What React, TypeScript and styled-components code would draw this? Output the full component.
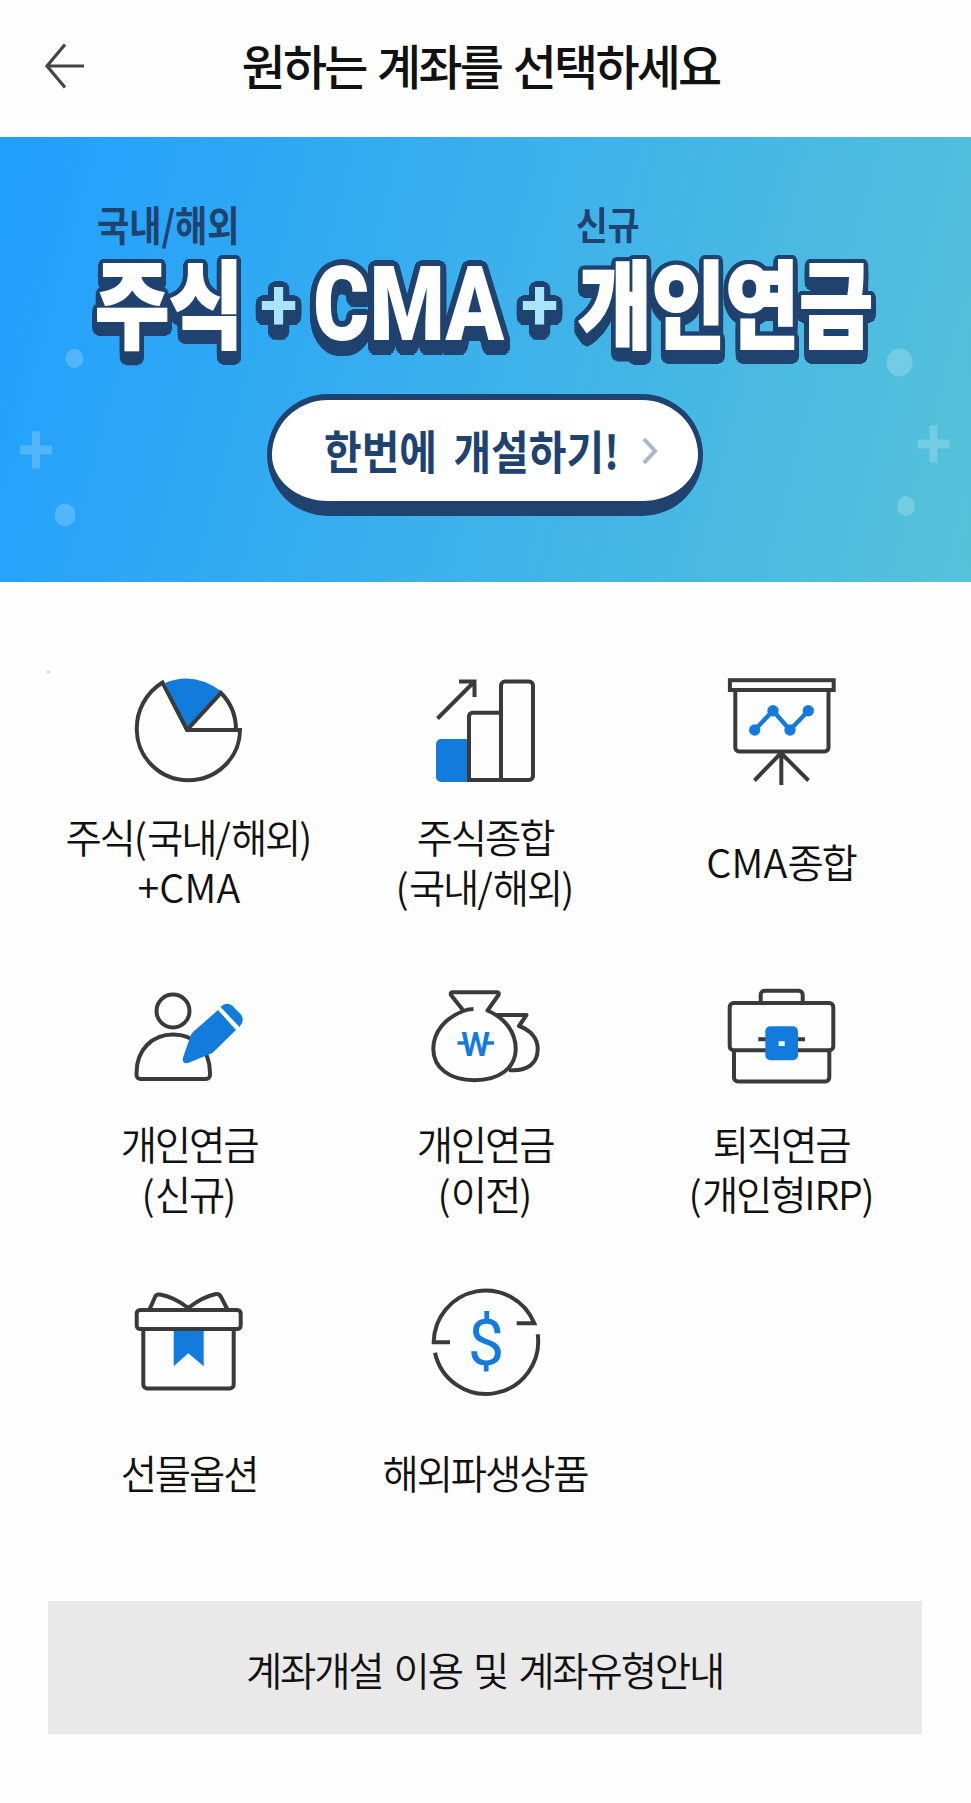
import React from 'react';
import styled, { createGlobalStyle } from 'styled-components';

const INK = '#3a3a3a';
const BLUE = '#127bdc';
const NAVY = '#20426f';

// Round outline of the headline letters, repeated downwards for their depth.
const outline = (radius: number, stretch: number, depth: number) => {
  const shadows: string[] = [];
  for (let drop = 0; drop <= depth; drop += 3) {
    for (let step = 0; step < 16; step += 1) {
      const angle = (step * Math.PI) / 8;
      const x = ((radius * Math.cos(angle)) / stretch).toFixed(1);
      const y = (radius * Math.sin(angle) + drop).toFixed(1);
      shadows.push(`${x}px ${y}px 0 ${NAVY}`);
    }
  }
  return shadows.join(', ');
};

const GlobalStyle = createGlobalStyle`
  * { box-sizing: border-box; }
  body { margin: 0; background: #fefefe; }
  button { border: 0; padding: 0; background: none; font: inherit; color: inherit; }
`;

const Page = styled.div`
  width: 971px;
  min-height: 1803px;
  display: flex;
  flex-direction: column;
  background: #fefefe;
  color: #111;
  font-family: 'Noto Sans CJK KR', sans-serif;
  overflow: hidden;
`;

const Header = styled.header`
  height: 137px;
  display: grid;
  grid-template-columns: 130px 1fr 130px;
  align-items: center;
`;

const BackButton = styled.button`
  width: 44px;
  height: 50px;
  margin: 0 0 6px 43px;
`;

const Title = styled.h1`
  margin: 0 10px 9px 0;
  font-size: 48px;
  line-height: 70px;
  font-weight: 500;
  letter-spacing: -2.8px;
  word-spacing: 3.5px;
  text-align: center;
  white-space: nowrap;
`;

const Banner = styled.section`
  position: relative;
  height: 445px;
  display: flex;
  flex-direction: column;
  background: linear-gradient(105deg, #209ffe 0%, #3bb0ec 48%, #56c2d9 100%);
  color: ${NAVY};
`;

const Decoration = styled.svg`
  position: absolute;
  inset: 0;
`;

const Eyebrows = styled.div`
  display: flex;
  align-items: flex-end;
  height: 54px;
  margin-top: 59px;
  padding-left: 97px;
`;

const Slot = styled.span<{ $width: number; $drop?: number }>`
  flex: none;
  width: ${p => p.$width}px;
  margin-top: ${p => p.$drop ?? 0}px;
  white-space: nowrap;
`;

const Eyebrow = styled.span<{ $size: number; $stretch: number }>`
  display: inline-block;
  font-size: ${p => p.$size}px;
  line-height: 54px;
  font-weight: 700;
  transform: scaleX(${p => p.$stretch});
  transform-origin: left;
`;

const Headline = styled.h2`
  display: flex;
  align-items: flex-start;
  height: 100px;
  margin: 0;
  padding-left: 95px;
`;

const Word = styled.span<{ $size: number; $stretch: number; $latin?: boolean }>`
  display: inline-block;
  font-family: ${p => (p.$latin ? "Roboto, 'Noto Sans CJK KR'" : "'Noto Sans CJK KR'")}, sans-serif;
  font-size: ${p => p.$size}px;
  line-height: 100px;
  font-weight: 900;
  color: #fff;
  -webkit-text-stroke: ${p => (p.$latin ? 0 : 2)}px currentColor;
  text-shadow: ${p => outline(p.$latin ? 6 : 5.5, p.$stretch, 9)};
  transform: scaleX(${p => p.$stretch});
  transform-origin: left;
`;

const Plus = styled(Word)`
  color: #a9e4ff;
  font-weight: 700;
`;

const OpenButton = styled.button`
  width: 436px;
  height: 122px;
  margin: 44px 0 0 267px;
  display: flex;
  align-items: center;
  padding: 0 39px 0 52px;
  justify-content: space-between;
  background: #fff;
  border: solid ${NAVY};
  border-width: 6px 5px 15px;
  border-radius: 61px;
`;

const OpenLabel = styled.span`
  width: 300px;
  margin-top: -4px;
  text-align: left;
  font-size: 46px;
  line-height: 60px;
  font-weight: 700;
  word-spacing: 8px;
  transform: scaleX(0.89);
  transform-origin: left;
  white-space: nowrap;
`;

const Main = styled.main`
  position: relative;
  padding: 88px 40px 0 41px;
`;

const Speck = styled.i`
  position: absolute;
  left: 47px;
  top: 89px;
  width: 3px;
  height: 2px;
  background: #ccc;
`;

const Accounts = styled.div`
  display: grid;
  grid-template-columns: repeat(3, 296px);
  grid-template-rows: 307px 304px 243px;
`;

const Account = styled.button`
  display: flex;
  flex-direction: column;
  align-items: center;
  justify-content: flex-start;
  gap: 21px;
`;

const Icon = styled.svg`
  display: block;
  overflow: visible;
  fill: none;
  stroke: ${INK};
  stroke-width: 4;
`;

const Label = styled.span`
  height: 100px;
  display: flex;
  flex-direction: column;
  justify-content: center;
  font-size: 39.5px;
  line-height: 50px;
  font-weight: 350;
  letter-spacing: -2.2px;
  text-align: center;
  white-space: nowrap;
`;

const Latin = styled.span<{ $tight: boolean }>`
  letter-spacing: ${p => (p.$tight ? -1.2 : 0.2)}px;
`;

const GuideButton = styled.button`
  width: 874px;
  height: 133px;
  margin: 77px 0 0 48px;
  padding: 1px 1px 0 0;
  background: #e9e9e9;
  font-size: 39.5px;
  font-weight: 350;
  letter-spacing: -2.2px;
  word-spacing: 4.5px;
`;

const Pie = () => (
  <>
    <path d="M58 60 L36 13 Q64 1 92 21 Z" fill={BLUE} stroke="none" />
    <path d="M58 60 L92 23 Q107 38 107 60" />
    <path d="M111 60 A51.800 50.500 0 0 1 59.300 110.300 A51.800 51 0 0 1 7.800 60 A54 54 0 0 1 33.500 12.500 L58 60 Z" />
  </>
);

const Bars = () => (
  <>
    <path d="M44 69 H16 a5 5 0 0 0 -5 5 V107 a5 5 0 0 0 5 5 H44 Z" fill={BLUE} stroke="none" />
    <path d="M76 42.7 H47.5 a3.5 3.5 0 0 0 -3.5 3.5 V110 H76" />
    <path d="M76 110 V15.5 a4 4 0 0 1 4 -4 H104 a4 4 0 0 1 4 4 V106 a4 4 0 0 1 -4 4 Z" />
    <path d="M12.5 48.5 L49 12 M34 11.5 H49.5 V27" />
  </>
);

const Board = () => (
  <>
    <rect x="8.9" y="10.2" width="103.8" height="9.8" />
    <path d="M14.3 20 V77.5 a4 4 0 0 0 4 4 H103.5 a4 4 0 0 0 4 -4 V20" />
    <path d="M60 83 L33.5 110.5 M60 83 L87.5 110.5 M60.3 82 V115" />
    <path d="M33.7 60 L52 40.7 L69 60 L87.3 40.7" stroke={BLUE} strokeWidth="4.4" />
    {[[33.7, 60], [52, 40.7], [69, 60], [87.3, 40.7]].map(([x, y]) => (
      <circle key={x} cx={x} cy={y} r="5.7" fill={BLUE} stroke="none" />
    ))}
  </>
);

const Subscriber = () => (
  <>
    <circle cx="44" cy="41" r="16.5" />
    <path d="M7.500 103 C7.500 79 24 64.5 44 64.5 C65 64.5 81 79 81 103 V105 a4 4 0 0 1 -4 4 H11.500 a4 4 0 0 1 -4 -4 Z" />
    <g fill={BLUE} stroke="none">
      <path d="M89 40 L107 60 L84.500 82 Q83 83.300 81 84 L59 93 Q52.500 94 54 87.500 L61.500 66 Q62 64 64 62 Z" />
      <path d="M91.5 37 Q97 31.500 103 35.500 L111.500 44 Q116.500 50 110.500 57 Z" />
    </g>
  </>
);

const MoneyBags = () => (
  <>
    <path d="M72 45 H101.500 L94 56 C105 60 112.700 68 112.700 79 C112.700 93 103 101.500 84 100" strokeLinejoin="round" />
    <path
      d="M48.500 39 Q42 39.300 38.300 41 C20 48 8.300 62 8.300 79 C8.300 98 25 110.300 49.500 110.300 C74 110.300 90.700 98 90.700 79 C90.700 62 80 48 62.500 40.500 L73.500 25 Q74.500 22.300 72 22.300 H28 Q25 22.300 26 25 L38.300 40.500"
      fill="#fefefe"
      strokeLinejoin="round"
    />
    <path d="M32.500 73 H40 M61 73 H69" stroke={BLUE} strokeWidth="3.500" />
    <text x="50.500" y="86.300" textAnchor="middle" fill={BLUE} stroke="none" fontFamily="Roboto, sans-serif" fontWeight="600" fontSize="33">W</text>
  </>
);

const Briefcase = () => (
  <>
    <path d="M39.700 33 V24.700 a4 4 0 0 1 4 -4 H77.700 a4 4 0 0 1 4 4 V33" />
    <rect x="8.700" y="33" width="103.600" height="47.300" rx="4" />
    <path d="M13 80 V107.500 a4 4 0 0 0 4 4 H104.300 a4 4 0 0 0 4 -4 V80 M37.300 69.300 H84" />
    <rect x="44.300" y="56.300" width="32.700" height="34" rx="5" fill={BLUE} stroke="none" />
    <rect x="57.700" y="71.300" width="6" height="4.700" fill="#fff" stroke="none" />
  </>
);

const Gift = () => (
  <>
    <path d="M20.300 40 L26 27 Q27 24 31 24.500 Q45 27 59.300 38 Q73 27 87 24 Q90.500 23.500 92 27 L98.700 40" />
    <path d="M14.300 59 V114.500 a4 4 0 0 0 4 4 H100.700 a4 4 0 0 0 4 -4 V59" />
    <path d="M44.700 60 H74.700 V96.300 L59.300 83.300 L44.700 96.300 Z" fill={BLUE} stroke="none" />
    <rect x="7.700" y="40" width="104" height="19" rx="3.500" />
  </>
);

const DollarCircle = () => (
  <>
    <path d="M25 72.300 H8.700 A52.200 52.500 0 0 1 109.300 53.300 H91.700" />
    <path d="M10 82.700 A52.200 52.500 0 0 0 112.700 64.300" />
    <text x="61" y="95" textAnchor="middle" fill={BLUE} stroke="none" fontFamily="Roboto, sans-serif" fontSize="65">$</text>
  </>
);

const accounts = [
  { lines: ['주식(국내/해외)', '+CMA'], Art: Pie, top: 0 },
  { lines: ['주식종합', '(국내/해외)'], Art: Bars, top: 0 },
  { lines: ['CMA종합'], Art: Board, top: 0 },
  { lines: ['개인연금', '(신규)'], Art: Subscriber, top: 7 },
  { lines: ['개인연금', '(이전)'], Art: MoneyBags, top: 7 },
  { lines: ['퇴직연금', '(개인형IRP)'], Art: Briefcase, top: 7 },
  { lines: ['선물옵션'], Art: Gift, top: 11 },
  { lines: ['해외파생상품'], Art: DollarCircle, top: 11 },
];

// Latin letters and punctuation are set looser than the Hangul around them.
const Line = ({ text }: { text: string }) => (
  <span>
    {text.split(/([A-Z+()/]+)/).filter(Boolean).map((run, i) =>
      /^[A-Z+()/]/.test(run) ? <Latin key={i} $tight={run.startsWith('IRP')}>{run}</Latin> : run,
    )}
  </span>
);

export default function App() {
  return (
    <Page>
      <GlobalStyle />
      <Header>
        <BackButton aria-label="뒤로">
          <svg width="44" height="50" fill="none" stroke="#444" strokeWidth="3.200">
            <path d="M22 3.500 L4 25 L22 46.500 M4 25 H41" />
          </svg>
        </BackButton>
        <Title>원하는 계좌를 선택하세요</Title>
      </Header>

      <Banner>
        <Decoration width="971" height="445" fill="#fff" fillOpacity="0.2">
          <ellipse cx="74.500" cy="221.500" rx="9" ry="9.700" />
          <ellipse cx="65" cy="378" rx="10.500" ry="11.300" />
          <ellipse cx="899.500" cy="225.500" rx="13" ry="14" />
          <ellipse cx="906" cy="369" rx="9" ry="10" />
          <path d="M32 294.500 h8 v14 h12 v9 h-12 v14 h-8 v-14 h-12 v-9 h12z" />
          <path d="M929.500 288.500 h8 v14 h12 v9 h-12 v14 h-8 v-14 h-12 v-9 h12z" />
        </Decoration>
        <Eyebrows>
          <Slot $width={479}><Eyebrow $size={41} $stretch={0.855}>국내/해외</Eyebrow></Slot>
          <Slot $width={100}><Eyebrow $size={38} $stretch={0.91}>신규</Eyebrow></Slot>
        </Eyebrows>
        <Headline>
          <Slot $width={165}><Word $size={95} $stretch={0.85}>주식</Word></Slot>
          <Slot $width={53} $drop={6}><Plus $size={72} $stretch={0.95} $latin>+</Plus></Slot>
          <Slot $width={208} $drop={5}><Word $size={103} $stretch={0.835} $latin>CMA</Word></Slot>
          <Slot $width={57} $drop={6}><Plus $size={72} $stretch={0.95} $latin>+</Plus></Slot>
          <Slot $width={300}><Word $size={95} $stretch={0.844}>개인연금</Word></Slot>
        </Headline>
        <OpenButton>
          <OpenLabel>한번에 개설하기!</OpenLabel>
          <svg width="18" height="30" fill="none" stroke="#a9b6cb" strokeWidth="4">
            <path d="M3 3 L14 15 L3 27" />
          </svg>
        </OpenButton>
      </Banner>

      <Main>
        <Speck />
        <Accounts>
          {accounts.map(({ lines, Art, top }, i) => (
            <Account key={i}>
              <Icon width="120" height="120" viewBox={`0 ${top} 120 120`}><Art /></Icon>
              <Label>{lines.map(line => <Line key={line} text={line} />)}</Label>
            </Account>
          ))}
        </Accounts>
      </Main>
      <GuideButton>계좌개설 이용 및 계좌유형안내</GuideButton>
    </Page>
  );
}
